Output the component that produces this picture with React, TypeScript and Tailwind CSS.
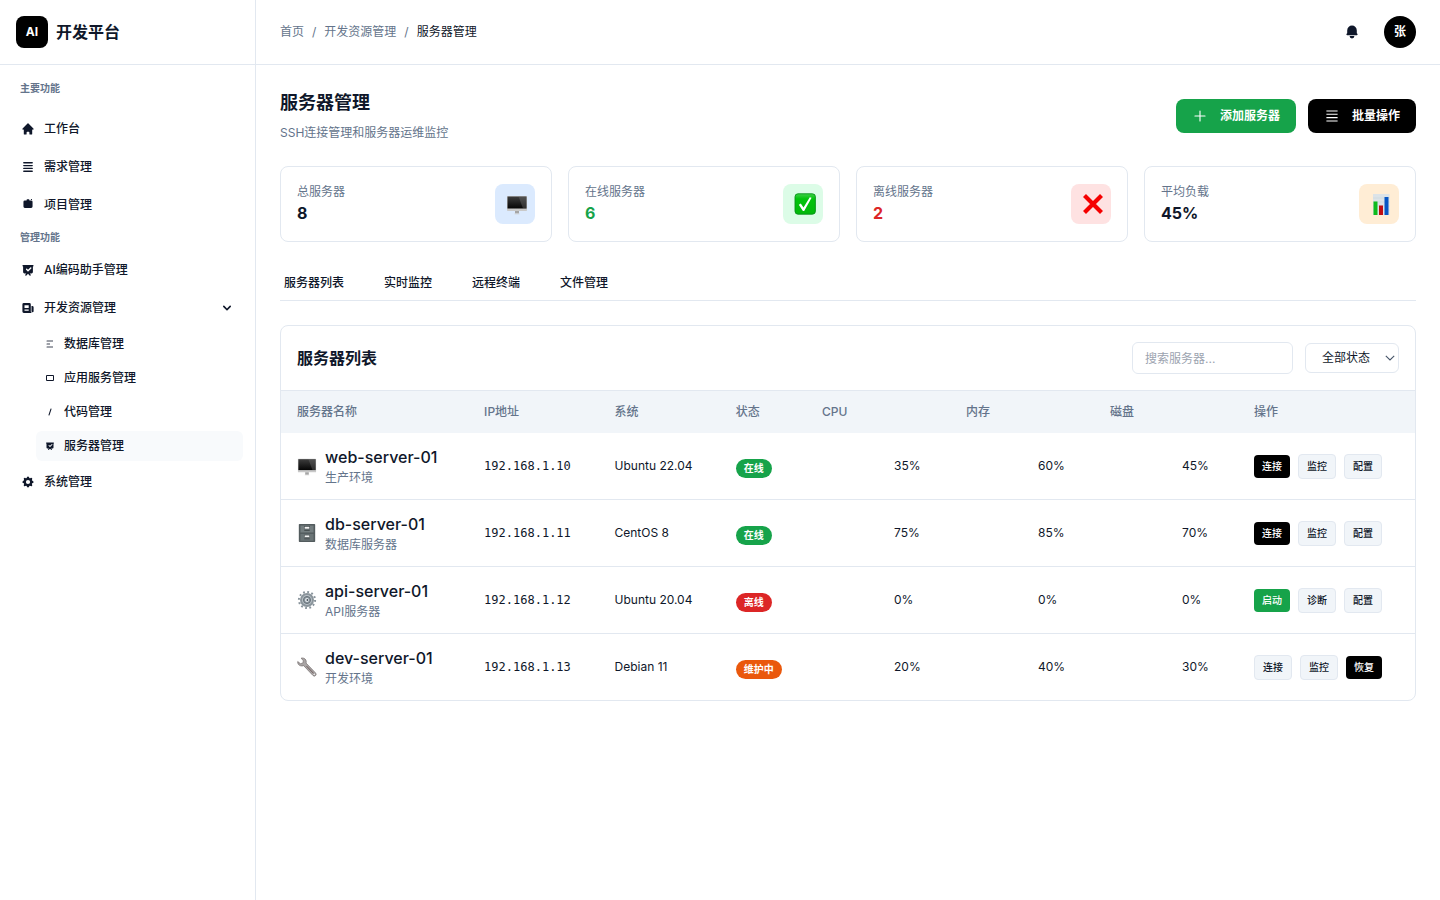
import type { ReactNode } from "react";

const PATHS = {
  home: "M10.707 2.293a1 1 0 00-1.414 0l-7 7a1 1 0 001.414 1.414L4 10.414V17a1 1 0 001 1h2a1 1 0 001-1v-2a1 1 0 011-1h2a1 1 0 011 1v2a1 1 0 001 1h2a1 1 0 001-1v-6.586l.293.293a1 1 0 001.414-1.414l-7-7z",
  list: "M3 4a1 1 0 011-1h12a1 1 0 110 2H4a1 1 0 01-1-1zm0 4a1 1 0 011-1h12a1 1 0 110 2H4a1 1 0 01-1-1zm0 4a1 1 0 011-1h12a1 1 0 110 2H4a1 1 0 01-1-1zm0 4a1 1 0 011-1h12a1 1 0 110 2H4a1 1 0 01-1-1z",
  project: "M8 3.5V2.8a1 1 0 011-1h2a1 1 0 011 1v.7h2.5a2 2 0 012 2v6.8a2 2 0 01-2 2h-9a2 2 0 01-2-2V5.500a2 2 0 012-2zM14.2 1.600h1.400v1.200h-1.400z",
  board: "M3 3a1 1 0 000 2v8a2 2 0 002 2h2.586l-1.293 1.293a1 1 0 101.414 1.414L10 15.414l2.293 2.293a1 1 0 001.414-1.414L12.414 15H15a2 2 0 002-2V5a1 1 0 100-2H3zm11.707 4.707a1 1 0 00-1.414-1.414L10 9.586 8.707 8.293a1 1 0 00-1.414 1.414l2 2a1 1 0 001.414 0l4-4z",
  news: "M2 5a2 2 0 012-2h8a2 2 0 012 2v10a2 2 0 002 2H4a2 2 0 01-2-2V5zm3 1h6v4H5V6zm6 6H5v2h6v-2zM15 7h1a2 2 0 012 2v5.5a1.5 1.5 0 01-3 0V7z",
  gear: "M11.49 3.17c-.38-1.56-2.6-1.56-2.98 0a1.532 1.532 0 01-2.286.948c-1.372-.836-2.942.734-2.106 2.106.54.886.061 2.042-.947 2.287-1.561.379-1.561 2.6 0 2.978a1.532 1.532 0 01.947 2.287c-.836 1.372.734 2.942 2.106 2.106a1.532 1.532 0 012.287.947c.379 1.561 2.6 1.561 2.978 0a1.533 1.533 0 012.287-.947c1.372.836 2.942-.734 2.106-2.106a1.533 1.533 0 01.947-2.287c1.561-.379 1.561-2.6 0-2.978a1.532 1.532 0 01-.947-2.287c.836-1.372-.734-2.942-2.106-2.106a1.532 1.532 0 01-2.287-.947zM10 13a3 3 0 100-6 3 3 0 000 6z",
  bell: "M10 2a6 6 0 00-6 6v3.586l-.707.707A1 1 0 004 14h12a1 1 0 00.707-1.707L16 11.586V8a6 6 0 00-6-6zM10 18a3 3 0 01-3-3h6a3 3 0 01-3 3z",
  chevron: "M5.293 7.293a1 1 0 011.414 0L10 10.586l3.293-3.293a1 1 0 111.414 1.414l-4 4a1 1 0 01-1.414 0l-4-4a1 1 0 010-1.414z",
  plus: "M10 3a.7.7 0 01.7.7v5.600h5.600a.7.7 0 010 1.400h-5.600v5.600a.7.7 0 01-1.400 0v-5.600H3.700a.7.7 0 010-1.400h5.600V3.700A.7.7 0 0110 3z",
  rows: "M3 3h14v1.400H3zM3 7.100h14v1.400H3zM3 11.300h14v1.400H3zM3 15.600h14V17H3z",
  database: "M3 4a1 1 0 011-1h12v2H4a1 1 0 01-1-1zM3 10a1 1 0 011-1h6v2H4a1 1 0 01-1-1zM3 16a1 1 0 011-1h12v2H4a1 1 0 01-1-1z",
  app: "M4 4a2 2 0 00-2 2v8a2 2 0 002 2h12a2 2 0 002-2V6a2 2 0 00-2-2H4zm0 2h12v8H4V6z",
  code: "M12.316 3.051a1 1 0 01.633 1.265l-4 12a1 1 0 11-1.898-.632l4-12a1 1 0 011.265-.633z",
} as const;

type IconName = keyof typeof PATHS;

function Icon({ name, className = "size-[14px]" }: { name: IconName; className?: string }) {
  return (
    <svg viewBox="0 0 20 20" fill="currentColor" className={className} aria-hidden="true">
      <path fillRule="evenodd" clipRule="evenodd" d={PATHS[name]} />
    </svg>
  );
}

const EMOJI_SIZE = "size-[22px]";

function Monitor() {
  return (
    <svg viewBox="0 0 22 22" className={EMOJI_SIZE} aria-hidden="true">
      <defs>
        <linearGradient id="screen" x1="0" y1="0" x2="0" y2="1">
          <stop offset="0" stopColor="#3d3d3d" />
          <stop offset="1" stopColor="#050505" />
        </linearGradient>
      </defs>
      <rect x="1" y="3" width="20" height="15" rx=".8" fill="#c9c9c9" />
      <rect x="1.500" y="3.500" width="19" height="12" fill="url(#screen)" />
      <path d="M12.500 3.500h8v12h-3.500z" fill="#777" opacity=".35" />
      <path d="M9 18h4v2.500H9z" fill="#a5a5a5" />
      <path d="M8.500 20.500h5v.8h-5z" fill="#d0d0d0" />
    </svg>
  );
}

function Check() {
  return (
    <svg viewBox="0 0 22 22" className={EMOJI_SIZE} aria-hidden="true">
      <defs>
        <linearGradient id="tick" x1="0" y1="0" x2="0" y2="1">
          <stop offset="0" stopColor="#3fd048" />
          <stop offset=".25" stopColor="#02c30c" />
          <stop offset="1" stopColor="#02b80a" />
        </linearGradient>
      </defs>
      <rect x="1" y=".8" width="20.400" height="20.400" rx="3" fill="url(#tick)" stroke="#07921a" strokeWidth=".9" />
      <path d="M4.800 11.800l2-1.400 2.700 4.200 6.300-10.300 1.800.5L10.200 18H8.900z" fill="#fff" />
    </svg>
  );
}

function Cross() {
  return (
    <svg viewBox="0 0 22 22" className={EMOJI_SIZE} aria-hidden="true">
      <path d="M2.500 2.500l17 17M19.500 2.500l-17 17" stroke="#f50000" strokeWidth="4.200" />
    </svg>
  );
}

function Chart() {
  return (
    <svg viewBox="0 0 22 22" className={EMOJI_SIZE} aria-hidden="true">
      <rect x="3" y="1" width="16.500" height="21" fill="#dce3e8" />
      <path d="M3 5h16.500M3 9h16.500M3 13h16.500M3 17h16.500" stroke="#c5d0d8" strokeWidth=".5" />
      <rect x="3.500" y="8.500" width="4" height="13.500" fill="#0fbb1c" />
      <rect x="9" y="12.500" width="4" height="9.500" fill="#c00d12" />
      <rect x="14.500" y="4" width="4" height="18" fill="#0756c4" />
    </svg>
  );
}

function Cabinet() {
  return (
    <svg viewBox="0 0 22 22" className={EMOJI_SIZE} aria-hidden="true">
      <rect x="2" y="1" width="18" height="20" rx=".8" fill="#535c5e" />
      <rect x="3.800" y="2.800" width="14.400" height="7.600" fill="#747e80" />
      <rect x="3.800" y="12" width="14.400" height="7.600" fill="#6a7476" />
      <rect x="8" y="4" width="6" height="2.600" fill="#f5f5f5" stroke="#41484a" strokeWidth=".6" />
      <rect x="8" y="13.300" width="6" height="2.600" fill="#f5f5f5" stroke="#41484a" strokeWidth=".6" />
      <path d="M8 8.200h6M8 17.400h6" stroke="#3e4547" strokeWidth=".9" />
    </svg>
  );
}

function Cog() {
  return (
    <svg viewBox="0 0 22 22" className={EMOJI_SIZE} aria-hidden="true">
      <circle cx="11" cy="11" r="8.900" fill="none" stroke="#87929a" strokeWidth="2.200" strokeDasharray="2 2.660" />
      <circle cx="11" cy="11" r="6.600" fill="#b9c1c7" stroke="#8a949b" strokeWidth="2.200" />
      <circle cx="11" cy="11" r="3.900" fill="#8b969e" stroke="#626d75" strokeWidth="1" />
      <circle cx="11" cy="11" r="2.100" fill="#e9edf0" />
      <circle cx="11.400" cy="11" r="1" fill="#46505a" />
    </svg>
  );
}

function Wrench() {
  return (
    <svg viewBox="0 0 22 22" className={EMOJI_SIZE} aria-hidden="true">
      <path
        d="M4.600 1.200c2-.5 4.300.3 5.200 2.200.5 1.100.5 2.300.2 3.300l10.400 10.800a2 2 0 01-2.800 2.900L7.300 9.500c-2 .8-4.500.3-5.800-1.400C.8 7.200.6 6 .8 5l3.100 2.400 2.700-.9.300-2.400z"
        fill="#a9a5a5"
        stroke="#6d6666"
        strokeWidth=".7"
      />
      <path d="M10.500 10l8 8.300" stroke="#6f5c5c" strokeWidth="1.100" />
      <circle cx="18.900" cy="18.900" r=".8" fill="#fff" />
    </svg>
  );
}

function NavItem({ icon, label, trailing }: { icon: IconName; label: string; trailing?: ReactNode }) {
  return (
    <a href="#" className="flex items-center gap-2 rounded-md px-3 py-2 font-medium">
      <span className="flex size-4 items-center justify-center">
        <Icon name={icon} />
      </span>
      <span className="flex-1">{label}</span>
      {trailing}
    </a>
  );
}

const SUB_ITEMS: { icon: IconName; label: string; active?: boolean; faint?: boolean }[] = [
  { icon: "database", label: "数据库管理", faint: true },
  { icon: "app", label: "应用服务管理" },
  { icon: "code", label: "代码管理" },
  { icon: "board", label: "服务器管理", active: true },
];

const STATS = [
  { label: "总服务器", value: "8", tone: "", box: "bg-blue-100", art: <Monitor /> },
  { label: "在线服务器", value: "6", tone: "text-[#16a34a]", box: "bg-[#dcfce7]", art: <Check /> },
  { label: "离线服务器", value: "2", tone: "text-[#dc2626]", box: "bg-[#fee2e2]", art: <Cross /> },
  { label: "平均负载", value: "45%", tone: "", box: "bg-[#ffedd5]", art: <Chart /> },
];

const TABS = ["服务器列表", "实时监控", "远程终端", "文件管理"];

const COLUMNS = [
  { label: "服务器名称", width: "w-[16.5%]" },
  { label: "IP地址", width: "w-[11.5%]" },
  { label: "系统", width: "w-[10.7%]" },
  { label: "状态", width: "w-[7.6%]" },
  { label: "CPU", width: "w-[12.7%]" },
  { label: "内存", width: "w-[12.7%]" },
  { label: "磁盘", width: "w-[12.7%]" },
  { label: "操作", width: "w-[15.6%]" },
];

const BUTTON_STYLES = {
  dark: "bg-black text-white",
  green: "bg-[#16a34a] text-white",
  plain: "border border-[#e2e8f0] bg-[#f1f5f9]",
};

type Action = [string, keyof typeof BUTTON_STYLES];

const SERVERS: {
  name: string; note: string; art: ReactNode; ip: string; os: string;
  status: string; tone: string; load: string[]; actions: Action[];
}[] = [
  {
    name: "web-server-01", note: "生产环境", art: <Monitor />, ip: "192.168.1.10", os: "Ubuntu 22.04",
    status: "在线", tone: "bg-[#16a34a]", load: ["35%", "60%", "45%"],
    actions: [["连接", "dark"], ["监控", "plain"], ["配置", "plain"]],
  },
  {
    name: "db-server-01", note: "数据库服务器", art: <Cabinet />, ip: "192.168.1.11", os: "CentOS 8",
    status: "在线", tone: "bg-[#16a34a]", load: ["75%", "85%", "70%"],
    actions: [["连接", "dark"], ["监控", "plain"], ["配置", "plain"]],
  },
  {
    name: "api-server-01", note: "API服务器", art: <Cog />, ip: "192.168.1.12", os: "Ubuntu 20.04",
    status: "离线", tone: "bg-[#dc2626]", load: ["0%", "0%", "0%"],
    actions: [["启动", "green"], ["诊断", "plain"], ["配置", "plain"]],
  },
  {
    name: "dev-server-01", note: "开发环境", art: <Wrench />, ip: "192.168.1.13", os: "Debian 11",
    status: "维护中", tone: "bg-[#ea580c]", load: ["20%", "40%", "30%"],
    actions: [["连接", "plain"], ["监控", "plain"], ["恢复", "dark"]],
  },
];

function Sidebar() {
  return (
    <aside className="w-64 shrink-0 border-r border-[#e2e8f0]">
      <div className="flex h-[65px] items-center gap-2 border-b border-[#e2e8f0] px-4">
        <span className="flex size-8 items-center justify-center rounded-lg bg-black font-bold text-white">AI</span>
        <span className="text-base font-semibold">开发平台</span>
      </div>
      <nav className="flex flex-col p-2">
        <h2 className="mb-2 px-3 py-2 text-[10px] leading-[15px] font-semibold text-[#64748b]">主要功能</h2>
        <div className="flex flex-col gap-1">
          <NavItem icon="home" label="工作台" />
          <NavItem icon="list" label="需求管理" />
          <NavItem icon="project" label="项目管理" />
        </div>
        <h2 className="px-3 py-2 text-[10px] leading-[15px] font-semibold text-[#64748b]">管理功能</h2>
        <div className="flex flex-col gap-1">
          <NavItem icon="board" label="AI编码助手管理" />
          <NavItem icon="news" label="开发资源管理" trailing={<Icon name="chevron" className="size-4" />} />
          <div className="mr-1 ml-7 flex flex-col gap-1">
            {SUB_ITEMS.map((item) => (
              <a
                key={item.label}
                href="#"
                aria-current={item.active ? "page" : undefined}
                className={`flex items-center gap-2 rounded-md px-2 py-[6px] font-medium ${item.active ? "bg-[#f8fafc]" : ""}`}
              >
                <span className="flex size-3 items-center justify-center">
                  <Icon name={item.icon} className={item.faint ? "size-[10px] opacity-80" : "size-[10px]"} />
                </span>
                {item.label}
              </a>
            ))}
          </div>
          <NavItem icon="gear" label="系统管理" />
        </div>
      </nav>
    </aside>
  );
}

function TopBar() {
  return (
    <header className="flex h-[65px] items-center justify-between border-b border-[#e2e8f0] px-6">
      <nav aria-label="面包屑" className="flex items-center gap-2 text-[#64748b]">
        <a href="#">首页</a>
        <span>/</span>
        <a href="#">开发资源管理</a>
        <span>/</span>
        <span className="text-[#0f172a]">服务器管理</span>
      </nav>
      <div className="flex items-center gap-4">
        <button type="button" aria-label="通知" className="flex size-8 items-center justify-center">
          <Icon name="bell" className="size-4" />
        </button>
        <button type="button" className="flex size-8 items-center justify-center rounded-full bg-black font-semibold text-white">
          张
        </button>
      </div>
    </header>
  );
}

function ServerTable() {
  return (
    <section className="mt-6 overflow-hidden rounded-lg border border-[#e2e8f0]">
      <div className="flex items-center justify-between border-b border-[#e2e8f0] p-4">
        <h2 className="text-base font-semibold">服务器列表</h2>
        <div className="flex items-center gap-3">
          <input
            type="search"
            aria-label="搜索服务器"
            placeholder="搜索服务器..."
            className="h-8 w-[161px] rounded-md border border-[#e2e8f0] px-3 placeholder:text-[#9ca3af]"
          />
          <div className="relative">
            <select
              aria-label="状态"
              className="block h-[30px] w-[94px] appearance-none rounded-md border border-[#e2e8f0] bg-white px-4"
            >
              <option>全部状态</option>
              <option>在线</option>
              <option>离线</option>
              <option>维护中</option>
            </select>
            <svg
              viewBox="0 0 10 6"
              fill="none"
              stroke="#475569"
              strokeWidth="1.100"
              className="pointer-events-none absolute top-3 right-1 h-[6px] w-[10px]"
              aria-hidden="true"
            >
              <path d="M.8.8L5 5 9.200.8" />
            </svg>
          </div>
        </div>
      </div>
      <table className="w-full table-fixed text-left">
        <thead className="bg-[#f1f5f9] text-[#64748b]">
          <tr>
            {COLUMNS.map((c) => (
              <th key={c.label} className={`px-4 py-3 font-medium ${c.width}`}>{c.label}</th>
            ))}
          </tr>
        </thead>
        <tbody className="divide-y divide-[#e2e8f0]">
          {SERVERS.map((s) => (
            <tr key={s.name}>
              <td className="px-4 py-3">
                <div className="flex items-center gap-2">
                  <span className="flex w-5 shrink-0 justify-center">{s.art}</span>
                  <div className="whitespace-nowrap">
                    <div className="text-base font-medium">{s.name}</div>
                    <div className="text-[#64748b]">{s.note}</div>
                  </div>
                </div>
              </td>
              <td className="px-4 py-3 font-['DejaVu_Sans_Mono',monospace]">{s.ip}</td>
              <td className="px-4 py-3 whitespace-nowrap">{s.os}</td>
              <td className="px-4 py-3 text-base whitespace-nowrap">
                <span className={`inline-flex rounded-full px-2 py-[2px] text-[10px] leading-[15px] font-semibold text-white ${s.tone}`}>
                  {s.status}
                </span>
              </td>
              {s.load.map((value, i) => (
                <td key={i} className="px-4 py-3">
                  <div className="flex items-center gap-2">
                    <span className="h-2 w-16 shrink-0 rounded-full" />
                    <span>{value}</span>
                  </div>
                </td>
              ))}
              <td className="px-4 py-3">
                <div className="flex items-center gap-2">
                  {s.actions.map(([label, style]) => (
                    <button
                      key={label}
                      type="button"
                      className={`shrink-0 rounded px-2 py-1 text-[10px] leading-[15px] font-medium ${BUTTON_STYLES[style]}`}
                    >
                      {label}
                    </button>
                  ))}
                </div>
              </td>
            </tr>
          ))}
        </tbody>
      </table>
    </section>
  );
}

export default function App() {
  return (
    <div className="flex min-h-screen bg-white font-['Inter','Noto_Sans_CJK_SC',sans-serif] text-[12px] leading-[18px] text-[#0f172a]">
      <Sidebar />
      <div className="min-w-0 flex-1">
        <TopBar />
        <main className="p-6">
          <div className="flex items-center justify-between">
            <div>
              <h1 className="text-lg leading-[27px] font-bold">服务器管理</h1>
              <p className="mt-2 text-[#64748b]">SSH连接管理和服务器运维监控</p>
            </div>
            <div className="flex gap-3">
              <button type="button" className="flex items-center gap-3 rounded-lg bg-[#16a34a] px-4 py-2 font-semibold text-white">
                <Icon name="plus" className="size-4" />
                添加服务器
              </button>
              <button type="button" className="flex items-center gap-3 rounded-lg bg-black px-4 py-2 font-semibold text-white">
                <Icon name="rows" className="size-4" />
                批量操作
              </button>
            </div>
          </div>

          <div className="mt-6 grid grid-cols-4 gap-4">
            {STATS.map((s) => (
              <div key={s.label} className="flex items-center justify-between rounded-lg border border-[#e2e8f0] p-4">
                <div>
                  <p className="text-[#64748b]">{s.label}</p>
                  <p className={`text-base font-bold ${s.tone}`}>{s.value}</p>
                </div>
                <div className={`flex size-10 items-center justify-center rounded-lg pl-1 ${s.box}`}>{s.art}</div>
              </div>
            ))}
          </div>

          <div role="tablist" className="mt-6 flex gap-8 border-b border-[#e2e8f0]">
            {TABS.map((t) => (
              <button key={t} type="button" role="tab" className="px-1 py-2 font-medium">{t}</button>
            ))}
          </div>

          <ServerTable />
        </main>
      </div>
    </div>
  );
}
